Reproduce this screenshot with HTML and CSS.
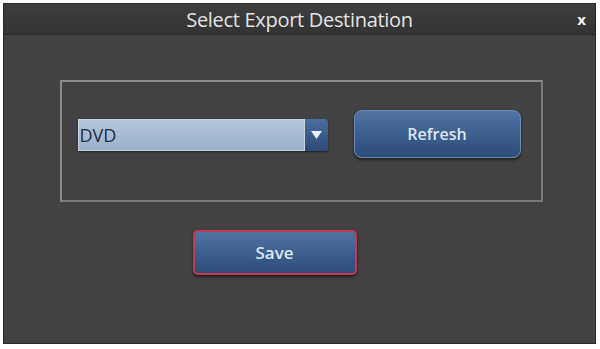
FILE: index.html
```html
<!DOCTYPE html>
<html lang="en">
<head>
    <meta charset="UTF-8">
    <title>Select Export Destination</title>
    <link rel="stylesheet" href="styles.css">
</head>
<body>
    <div class="dialog">
        <div class="title-bar">
            <span class="title">Select Export Destination</span>
            <span class="close">x</span>
        </div>
        <div class="content">
            <div class="group">
                <div class="select">
                    <span class="select-value">DVD</span>
                    <span class="select-arrow">
                        <svg width="11" height="8" viewBox="0 0 11 8"><path d="M0 0 L11 0 L5.5 8 Z" fill="#e8eef6"/></svg>
                    </span>
                </div>
                <button class="btn refresh">Refresh</button>
            </div>
            <button class="btn save">Save</button>
        </div>
    </div>
</body>
</html>
```

FILE: styles.css
```css
:root {
    --body-bg: #424242;
    --border-light: #8c8c8c;
    --btn-top: #4f73a3;
    --btn-bottom: #2c4c7a;
}

body {
    margin: 0;
    background: #ffffff;
    font-family: "Open Sans", "Noto Sans", sans-serif;
}

.dialog {
    margin: 3px 4px 3px 3px;
    height: 341px;
    background: var(--body-bg);
    border: 1px solid #2a2a2a;
    box-sizing: border-box;
    display: flex;
    flex-direction: column;
}

.title-bar {
    height: 30px;
    flex: none;
    background: linear-gradient(#3e3e3e, #333333);
    border-bottom: 1px solid #2a2a2a;
    position: relative;
    display: flex;
    justify-content: center;
    align-items: center;
}

.title {
    color: #e4e4e4;
    font-size: 20px;
    letter-spacing: -0.3px;
}

.close {
    position: absolute;
    right: 9px;
    top: 5px;
    color: #f2f2f2;
    font-weight: bold;
    font-size: 15px;
}

.content {
    display: flex;
    flex-direction: column;
    align-items: center;
    padding-top: 45px;
}

.group {
    width: 483px;
    height: 122px;
    box-sizing: border-box;
    border: 2px solid var(--border-light);
    border-right-color: #7a7a7a;
    border-bottom-color: #7a7a7a;
    display: flex;
    align-items: center;
    padding: 0 0 0 16px;
    margin-left: 3px;
}

.select {
    width: 250px;
    height: 32px;
    display: flex;
    margin-bottom: 12px;
    box-shadow: 0 1px 2px rgba(0, 0, 0, 0.5);
    border-radius: 2px;
}

.select-value {
    flex: 1;
    background: linear-gradient(#b4c5d9, #9cb1c9);
    border: 1px solid #c8d4e2;
    color: #1c2d46;
    font-size: 18px;
    display: flex;
    align-items: center;
    padding-left: 1px;
}

.select-arrow {
    width: 23px;
    background: linear-gradient(#4a6e9e, #2b4a77);
    border-radius: 0 4px 4px 0;
    display: flex;
    align-items: center;
    justify-content: center;
}

.btn {
    font-family: "Open Sans", "Noto Sans", sans-serif;
    font-size: 16px;
    font-weight: 600;
    color: #dde6f1;
    background: linear-gradient(var(--btn-top), var(--btn-bottom));
    border: 1px solid #6b8bb6;
    border-radius: 8px;
    box-shadow: 0 2px 3px rgba(0, 0, 0, 0.55);
    padding: 0;
}

.refresh {
    width: 167px;
    height: 48px;
    margin-left: 26px;
    margin-bottom: 14px;
}

.save {
    width: 164px;
    height: 45px;
    margin-top: 28px;
    margin-right: 50px;
    border: 2px solid #c23a50;
    border-radius: 5px;
    font-size: 17px;
}
```
